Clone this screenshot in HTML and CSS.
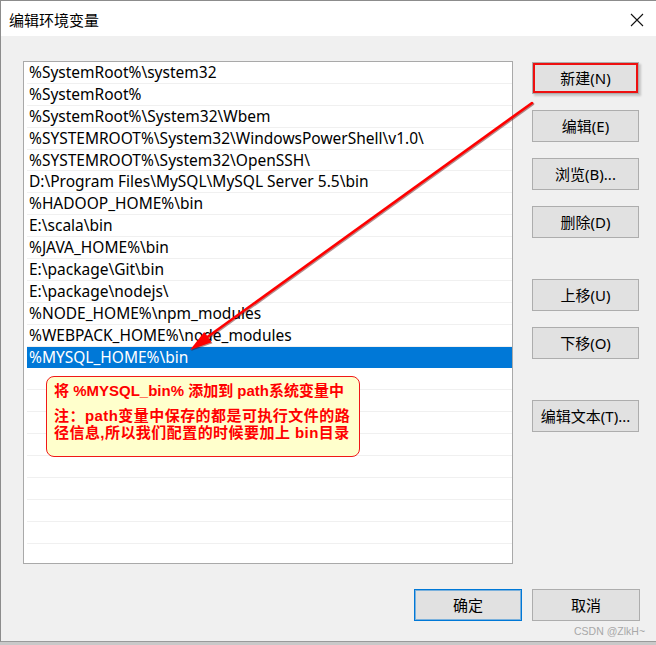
FILE: index.html
```html
<!DOCTYPE html>
<html lang="zh-CN">
<head>
<meta charset="utf-8">
<title>编辑环境变量</title>
<link rel="stylesheet" href="styles.css">
</head>
<body>
<div class="window">
  <div class="titlebar">
    <span class="title">编辑环境变量</span>
    <svg class="close" width="14" height="14" viewBox="0 0 14 14"><path d="M1 1L13 13M13 1L1 13" stroke="#111" stroke-width="1.1" fill="none"/></svg>
  </div>
  <div class="content">
    <div class="main">
      <div class="list">
        <div class="row">%SystemRoot%\system32</div>
        <div class="row">%SystemRoot%</div>
        <div class="row">%SystemRoot%\System32\Wbem</div>
        <div class="row">%SYSTEMROOT%\System32\WindowsPowerShell\v1.0\</div>
        <div class="row">%SYSTEMROOT%\System32\OpenSSH\</div>
        <div class="row">D:\Program Files\MySQL\MySQL Server 5.5\bin</div>
        <div class="row">%HADOOP_HOME%\bin</div>
        <div class="row">E:\scala\bin</div>
        <div class="row">%JAVA_HOME%\bin</div>
        <div class="row">E:\package\Git\bin</div>
        <div class="row">E:\package\nodejs\</div>
        <div class="row">%NODE_HOME%\npm_modules</div>
        <div class="row">%WEBPACK_HOME%\node_modules</div>
        <div class="row sel">%MYSQL_HOME%\bin</div>
        <div class="row"></div>
        <div class="row"></div>
        <div class="row"></div>
        <div class="row"></div>
        <div class="row"></div>
        <div class="row"></div>
        <div class="row"></div>
        <div class="row"></div>
        <div class="row"></div>
      </div>
      <div class="side">
        <button class="btn mark">新建(N)</button>
        <button class="btn">编辑(E)</button>
        <button class="btn">浏览(B)...</button>
        <button class="btn">删除(D)</button>
        <button class="btn spaced">上移(U)</button>
        <button class="btn">下移(O)</button>
        <button class="btn spaced">编辑文本(T)...</button>
      </div>
    </div>
    <div class="footer">
      <button class="btn wide default">确定</button>
      <button class="btn wide">取消</button>
    </div>
  </div>
  <div class="callout">
    <p class="c1">将 %MYSQL_bin% 添加到 path系统变量中</p>
    <p class="c2">注：path变量中保存的都是可执行文件的路<br>径信息,所以我们配置的时候要加上 bin目录</p>
  </div>
  <svg class="arrow" width="656" height="645" viewBox="0 0 656 645">
    <line x1="532" y1="103" x2="206" y2="338" stroke="#ff0000" stroke-width="2.6" stroke-linecap="round"/>
    <polygon points="190,350 211.5,342.3 204.2,332" fill="#ff0000"/>
  </svg>
  <span class="watermark">CSDN @ZlkH~</span>
</div>
</body>
</html>
```

FILE: styles.css
```css
html {
  background: #c9c9c9;
}
body {
  margin: 0;
  font-family: "Noto Sans", "Noto Sans CJK SC", sans-serif;
}
.window {
  position: relative;
  width: 655px;
  height: 640px;
  border-left: 1px solid #8c8c8c;
  border-top: 1px solid #8c8c8c;
  border-bottom: 1px solid #9a9a9a;
  background: #f0f0f0;
  overflow: hidden;
}
.titlebar {
  height: 35px;
  background: #ffffff;
  display: flex;
  align-items: center;
  justify-content: space-between;
  padding: 2px 12px 0 8px;
  box-sizing: border-box;
}
.title {
  font-family: "Noto Sans CJK SC", sans-serif;
  font-size: 15px;
  color: #000;
}
.close {
  display: block;
  margin-top: 1px;
}
.content {
  padding: 25px 16px 0 22px;
}
.main {
  display: flex;
  gap: 19px;
  align-items: flex-start;
}
.list {
  width: 490px;
  height: 503px;
  box-sizing: border-box;
  border: 1px solid #a9a9a9;
  background: #fff;
  overflow: hidden;
  padding: 0 0 0 3px;
}
.row {
  height: 21.9px;
  box-sizing: border-box;
  border-bottom: 1px solid #f0f0f0;
  padding-left: 2px;
  font-family: "Noto Sans", sans-serif;
  font-size: 15.5px;
  line-height: 21px;
  color: #000;
  white-space: nowrap;
}
.row.sel {
  background: #0078d7;
  color: #fff;
  border-bottom-color: #0078d7;
}
.side {
  display: flex;
  flex-direction: column;
  gap: 16px;
  margin-top: 1px;
}
.btn {
  width: 107px;
  height: 32px;
  box-sizing: border-box;
  border: 1px solid #adadad;
  background: #e1e1e1;
  font-family: "Noto Sans", "Noto Sans CJK SC", sans-serif;
  font-size: 15px;
  color: #000;
  padding: 0;
  margin: 0;
  line-height: 30px;
}
.btn.spaced {
  margin-top: 25px;
}
.btn.mark {
  outline: 2px solid #ee1010;
  outline-offset: -3px;
  box-shadow: 2px 2px 2px rgba(0, 0, 0, 0.18);
}
.footer {
  display: flex;
  justify-content: flex-end;
  gap: 10px;
  margin-top: 25px;
}
.btn.wide {
  width: 108px;
}
.btn.default {
  border: 1px solid #0078d7;
  box-shadow: inset 0 0 0 1px rgba(0, 120, 215, 0.45);
}
.callout {
  position: absolute;
  left: 45px;
  top: 375px;
  width: 314px;
  height: 81px;
  box-sizing: border-box;
  border: 1.5px solid #f01818;
  border-radius: 8px;
  background: #ffffcc;
  padding: 5px 0 0 7px;
  color: #ff0000;
  font-family: "Liberation Sans", "Noto Sans CJK SC", sans-serif;
  font-weight: bold;
  font-size: 15px;
}
.callout p {
  margin: 0;
  line-height: 17px;
  white-space: nowrap;
}
.callout .c1 {
  margin-bottom: 8px;
}
.callout .c2 {
  letter-spacing: 0.45px;
}
.arrow {
  position: absolute;
  left: -1px;
  top: -1px;
  pointer-events: none;
  filter: drop-shadow(1px 1px 0.6px rgba(90, 0, 0, 0.45));
}
.watermark {
  position: absolute;
  left: 573px;
  top: 624px;
  font-family: "Liberation Sans", sans-serif;
  font-size: 10.5px;
  color: #a8a8a8;
}
```
